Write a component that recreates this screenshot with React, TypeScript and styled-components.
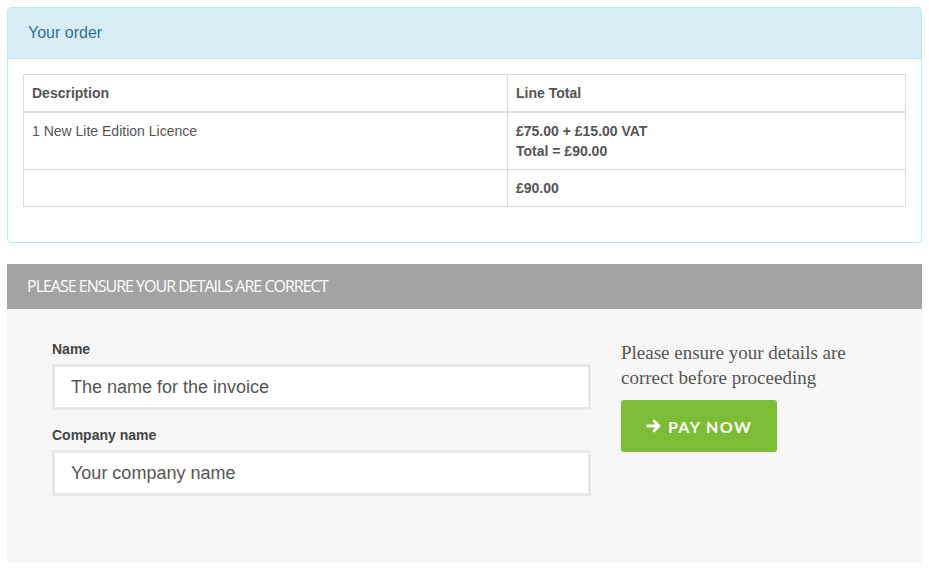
import styled, { createGlobalStyle } from 'styled-components';

const GlobalStyle = createGlobalStyle`
  html, body {
    margin: 0;
    padding: 0;
    background: #ffffff;
  }
  body {
    font-family: "Liberation Sans", Arial, sans-serif;
    font-size: 14px;
    line-height: 20px;
    color: #555555;
  }
  * {
    box-sizing: border-box;
  }
`;

interface OrderLine {
  description: string;
  total: string[];
}

const lines: OrderLine[] = [
  { description: '1 New Lite Edition Licence', total: ['£75.00 + £15.00 VAT', 'Total = £90.00'] },
];

export default function App() {
  return (
    <>
      <GlobalStyle />
      <Page>
        <Panel>
          <PanelHeading>Your order</PanelHeading>
          <PanelBody>
            <OrderTable>
              <thead>
                <tr>
                  <HeadCell>Description</HeadCell>
                  <HeadCell>Line Total</HeadCell>
                </tr>
              </thead>
              <tbody>
                {lines.map((line) => (
                  <tr key={line.description}>
                    <Cell>{line.description}</Cell>
                    <Cell $bold>
                      {line.total.map((t) => (
                        <div key={t}>{t}</div>
                      ))}
                    </Cell>
                  </tr>
                ))}
                <tr>
                  <Cell />
                  <Cell $bold>£90.00</Cell>
                </tr>
              </tbody>
            </OrderTable>
          </PanelBody>
        </Panel>

        <Details>
          <DetailsHeading>PLEASE ENSURE YOUR DETAILS ARE CORRECT</DetailsHeading>
          <DetailsBody>
            <Form>
              <Field>
                <Label htmlFor="name">Name</Label>
                <Input id="name" placeholder="The name for the invoice" />
              </Field>
              <Field>
                <Label htmlFor="company">Company name</Label>
                <Input id="company" placeholder="Your company name" />
              </Field>
            </Form>
            <Aside>
              <Note>Please ensure your details are correct before proceeding</Note>
              <PayButton type="button">
                <svg width="16" height="16" viewBox="0 0 16 16" aria-hidden="true">
                  <path
                    d="M1.5 8h11M8 3L13 8 8 13"
                    fill="none"
                    stroke="#ffffff"
                    strokeWidth="2.8"
                    strokeLinecap="round"
                    strokeLinejoin="round"
                  />
                </svg>
                PAY NOW
              </PayButton>
            </Aside>
          </DetailsBody>
        </Details>
      </Page>
    </>
  );
}

const Page = styled.div`
  padding: 7px;
  width: 929px;
`;

const Panel = styled.div`
  border: 1px solid #bce8f1;
  border-radius: 4px;
  background: #ffffff;
  margin-bottom: 21px;
`;

const PanelHeading = styled.div`
  background: #d9edf7;
  border-bottom: 1px solid #bce8f1;
  border-radius: 3px 3px 0 0;
  color: #31708f;
  font-size: 16px;
  height: 51px;
  line-height: 50px;
  padding: 0 20px;
`;

const PanelBody = styled.div`
  padding: 15px 15px 35px;
`;

const OrderTable = styled.table`
  width: 100%;
  border-collapse: collapse;
  border: 1px solid #dddddd;
  table-layout: fixed;
`;

const HeadCell = styled.th`
  text-align: left;
  font-weight: bold;
  color: #555555;
  padding: 8px;
  border: 1px solid #dddddd;
  border-bottom: 2px solid #dddddd;
  line-height: 20px;
  &:first-child {
    width: 484px;
  }
`;

const Cell = styled.td<{ $bold?: boolean }>`
  vertical-align: top;
  padding: 8px;
  border: 1px solid #dddddd;
  line-height: 20px;
  height: 37px;
  color: #555555;
  font-weight: ${({ $bold }) => ($bold ? 'bold' : 'normal')};
`;

const Details = styled.section`
  background: #f7f7f7;
`;

const DetailsHeading = styled.div`
  background: #a3a3a3;
  color: #ffffff;
  font-family: "Open Sans", sans-serif;
  font-size: 16px;
  letter-spacing: -1px;
  height: 45px;
  line-height: 45px;
  padding: 0 20px;
`;

const DetailsBody = styled.div`
  display: grid;
  grid-template-columns: 539px 1fr;
  column-gap: 30px;
  padding: 30px 20px 67px 45px;
`;

const Form = styled.div`
  display: flex;
  flex-direction: column;
  gap: 15px;
`;

const Field = styled.div`
  display: flex;
  flex-direction: column;
  gap: 5px;
`;

const Label = styled.label`
  font-weight: bold;
  color: #444444;
  font-size: 14px;
  line-height: 20px;
`;

const Input = styled.input`
  height: 46px;
  width: 100%;
  border: 3px solid #e8e8e8;
  background: #ffffff;
  padding: 0 16px;
  font-family: "Liberation Sans", Arial, sans-serif;
  font-size: 18px;
  color: #555555;
  outline: none;
  &::placeholder {
    color: #555555;
    opacity: 1;
  }
`;

const Aside = styled.div`
  display: flex;
  flex-direction: column;
  align-items: flex-start;
  padding-top: 1px;
`;

const Note = styled.p`
  margin: 0 0 10px;
  max-width: 250px;
  font-family: "Liberation Serif", "Times New Roman", serif;
  font-size: 19px;
  line-height: 25px;
  color: #555555;
`;

const PayButton = styled.button`
  display: inline-flex;
  align-items: center;
  gap: 6px;
  width: 156px;
  height: 52px;
  justify-content: center;
  background: #7dbd35;
  border: none;
  border-radius: 3px;
  color: #ffffff;
  font-family: Lato, "Open Sans", sans-serif;
  font-weight: bold;
  font-size: 16px;
  letter-spacing: 1.4px;
  cursor: pointer;
`;
